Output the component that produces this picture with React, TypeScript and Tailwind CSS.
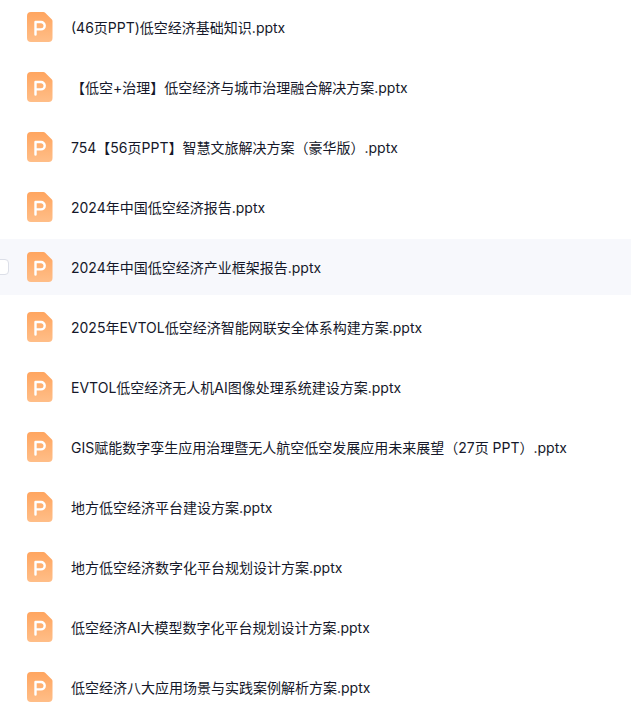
const files = [
  "(46页PPT)低空经济基础知识.pptx",
  "【低空+治理】低空经济与城市治理融合解决方案.pptx",
  "754【56页PPT】智慧文旅解决方案（豪华版）.pptx",
  "2024年中国低空经济报告.pptx",
  "2024年中国低空经济产业框架报告.pptx",
  "2025年EVTOL低空经济智能网联安全体系构建方案.pptx",
  "EVTOL低空经济无人机AI图像处理系统建设方案.pptx",
  "GIS赋能数字孪生应用治理暨无人航空低空发展应用未来展望（27页 PPT）.pptx",
  "地方低空经济平台建设方案.pptx",
  "地方低空经济数字化平台规划设计方案.pptx",
  "低空经济AI大模型数字化平台规划设计方案.pptx",
  "低空经济八大应用场景与实践案例解析方案.pptx",
];

function PptIcon() {
  return (
    <svg width="26" height="30" viewBox="0 0 26 30" className="shrink-0">
      <defs>
        <linearGradient id="ppt" x1="0" y1="0" x2="0" y2="1">
          <stop offset="0" stopColor="#ffa55f" />
          <stop offset="1" stopColor="#ffbe88" />
        </linearGradient>
      </defs>
      <path d="M4 0H16.5a2 2 0 0 1 1.4.6L24.9 7.6a2 2 0 0 1 .6 1.4V26a4 4 0 0 1-4 4H4a4 4 0 0 1-4-4V4a4 4 0 0 1 4-4Z" fill="url(#ppt)" />
      <path d="M8.5 22.5V10H14a3.7 3.7 0 0 1 0 7.4H8.5" fill="none" stroke="#fff" strokeWidth="2.4" strokeLinecap="round" strokeLinejoin="round" />
    </svg>
  );
}

export default function App() {
  return (
    <div className="h-[721px] w-[631px] overflow-hidden bg-white font-['Inter','Noto_Sans_CJK_SC',sans-serif]">
      <div className="-mt-px flex flex-col gap-1">
        {files.map((name, i) => (
          <div key={name} className={`relative flex h-14 shrink-0 items-center pl-[27px] ${i === 4 ? "bg-[#f7f8fc]" : "bg-white"}`}>
            {i === 4 && (
              <div className="absolute -left-[7px] top-5 size-4 rounded-[4px] border border-[#dcdfe8] bg-white" />
            )}
            <PptIcon />
            <span className="ml-[18px] whitespace-nowrap pt-[2px] text-[14px] leading-[22px] text-[#15182a]">{name}</span>
          </div>
        ))}
      </div>
    </div>
  );
}
